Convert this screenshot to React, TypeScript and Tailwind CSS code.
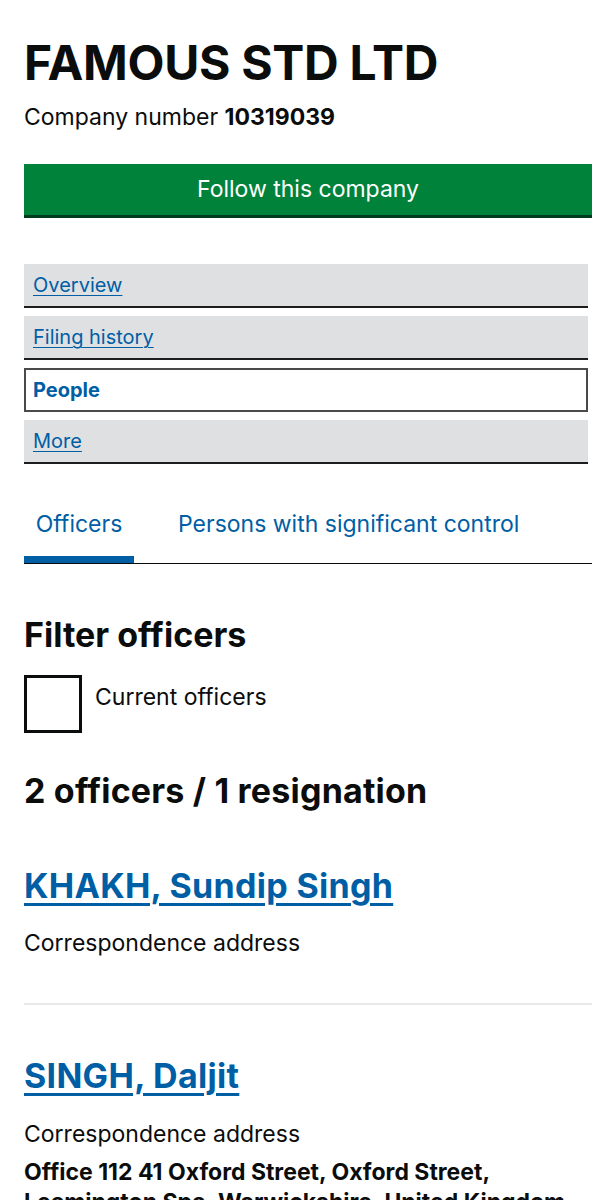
import React from "react";

const font = { fontFamily: "Inter, 'Noto Sans', 'Liberation Sans', sans-serif" };

function NavLink({ label }: { label: string }) {
  return (
    <div className="flex h-[44px] items-center border-b-2 border-[#1d1d1d] bg-[#dee0e2] pl-[9px]">
      <a className="text-[20px] leading-[24px] text-[#005ea5] underline decoration-1 underline-offset-[3px]">{label}</a>
    </div>
  );
}

export default function App() {
  return (
    <div className="h-[1200px] overflow-hidden bg-white text-[#0b0c0c]" style={font}>
      <div className="px-6 pt-[35px]">
        <h1 className="text-[48px] font-bold leading-[56px] tracking-[-0.3px]">FAMOUS STD LTD</h1>
        <p className="mt-[11px] text-[23px] leading-[30px]">
          Company number <strong className="font-bold">10319039</strong>
        </p>
        <button className="mt-[32px] flex h-[54px] w-full items-center justify-center border-b-[3px] border-[#003d1c] bg-[#00823b] pb-[1px] text-[23px] text-white">
          Follow this company
        </button>

        <nav className="mr-[4px] mt-[46px] flex flex-col gap-[8px]">
          <NavLink label="Overview" />
          <NavLink label="Filing history" />
          <div className="flex h-[44px] items-center border-2 border-[#4a4a4a] bg-white pl-[7px]">
            <span className="text-[20px] font-bold leading-[24px] text-[#005ea5]">People</span>
          </div>
          <NavLink label="More" />
        </nav>

        <div className="mt-[36px] flex border-b border-[#0b0c0c]">
          <div className="flex h-[63px] w-[110px] justify-center border-b-[7px] border-[#005ea5] pt-[9px] text-[23px] leading-[30px] text-[#005ea5]">
            Officers
          </div>
          <div className="ml-[44px] pt-[9px] text-[23px] leading-[30px] text-[#005ea5]">
            Persons with significant control
          </div>
        </div>

        <h2 className="mt-[51px] text-[34px] font-bold leading-[40px]">Filter officers</h2>
        <div className="mt-[20px] flex items-start">
          <div className="h-[58px] w-[58px] shrink-0 border-[3px] border-[#0b0c0c]"></div>
          <span className="ml-[13px] mt-[7px] text-[23px] leading-[30px]">Current officers</span>
        </div>

        <h2 className="mt-[38px] text-[34px] font-bold leading-[40px] tracking-[0.2px]">2 officers / 1 resignation</h2>

        <div className="mt-[55px]">
          <a className="text-[34px] font-bold leading-[40px] tracking-[0.3px] text-[#005ea5] underline decoration-[3px] underline-offset-[5px]">
            KHAKH, Sundip Singh
          </a>
          <p className="mt-[22px] text-[23px] leading-[30px]">Correspondence address</p>
        </div>
        <hr className="mt-[45px] border-0 border-t-2 border-[#e8e9ea]" />
        <div className="mt-[51px]">
          <a className="text-[34px] font-bold leading-[40px] tracking-[0.3px] text-[#005ea5] underline decoration-[3px] underline-offset-[5px]">
            SINGH, Daljit
          </a>
          <p className="mt-[23px] text-[23px] leading-[30px]">Correspondence address</p>
          <p className="mt-[8px] text-[23px] font-bold leading-[30px]">
            Office 112 41 Oxford Street, Oxford Street,
            <br />
            Leamington Spa, Warwickshire, United Kingdom, CV32 4DW
          </p>
        </div>
      </div>
    </div>
  );
}
